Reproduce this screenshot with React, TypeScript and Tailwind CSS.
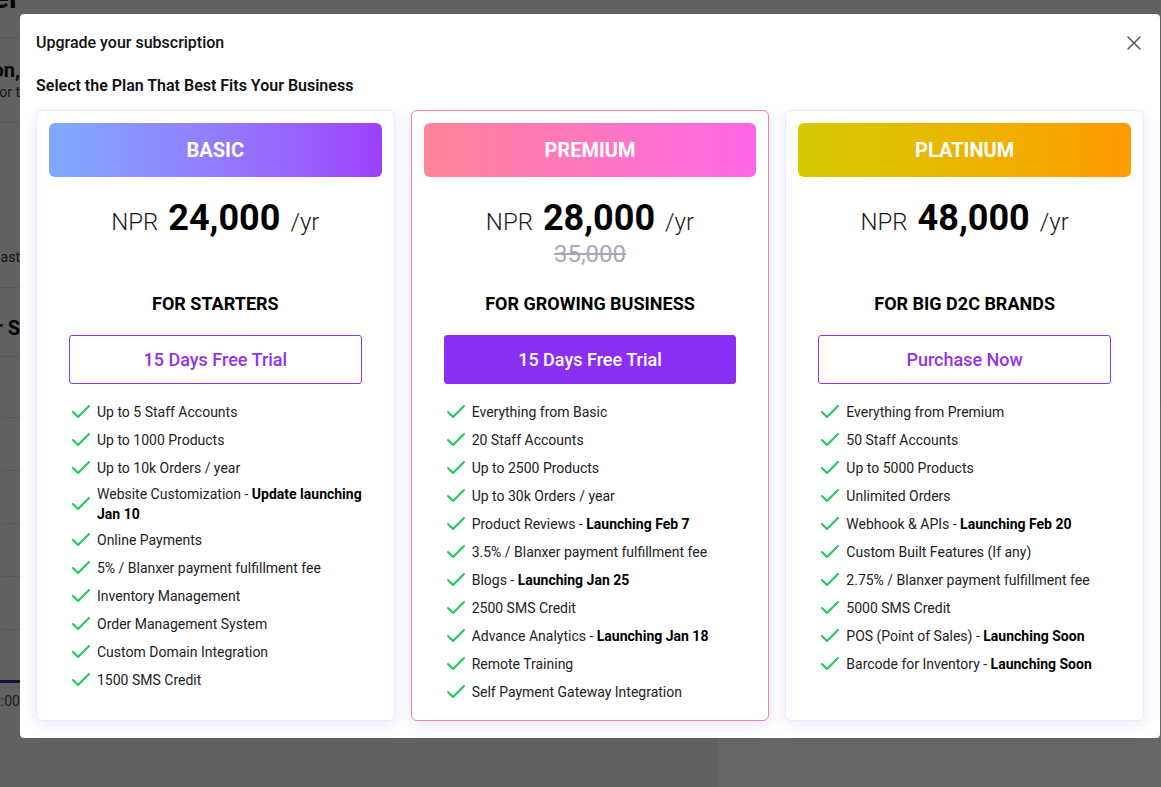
import React from "react";
import { Check, X } from "lucide-react";

// ──────────────────────────────────────────────────────────────
// Upgrade subscription modal — plan picker
// ──────────────────────────────────────────────────────────────

type Feature = { text: string; bold?: string };

type Plan = {
  name: string;
  gradient: string;
  price: string;
  oldPrice?: string;
  tagline: string;
  cta: string;
  filled?: boolean;
  highlight?: boolean;
  features: Feature[];
};

const plans: Plan[] = [
  {
    name: "BASIC",
    gradient: "bg-linear-to-r from-[#7eaaff] to-[#9c3ffd]",
    price: "24,000",
    tagline: "FOR STARTERS",
    cta: "15 Days Free Trial",
    features: [
      { text: "Up to 5 Staff Accounts" },
      { text: "Up to 1000 Products" },
      { text: "Up to 10k Orders / year" },
      { text: "Website Customization - ", bold: "Update launching Jan 10" },
      { text: "Online Payments" },
      { text: "5% / Blanxer payment fulfillment fee" },
      { text: "Inventory Management" },
      { text: "Order Management System" },
      { text: "Custom Domain Integration" },
      { text: "1500 SMS Credit" },
    ],
  },
  {
    name: "PREMIUM",
    gradient: "bg-linear-to-r from-[#ff8497] to-[#ff66e6]",
    price: "28,000",
    oldPrice: "35,000",
    tagline: "FOR GROWING BUSINESS",
    cta: "15 Days Free Trial",
    filled: true,
    highlight: true,
    features: [
      { text: "Everything from Basic" },
      { text: "20 Staff Accounts" },
      { text: "Up to 2500 Products" },
      { text: "Up to 30k Orders / year" },
      { text: "Product Reviews - ", bold: "Launching Feb 7" },
      { text: "3.5% / Blanxer payment fulfillment fee" },
      { text: "Blogs - ", bold: "Launching Jan 25" },
      { text: "2500 SMS Credit" },
      { text: "Advance Analytics - ", bold: "Launching Jan 18" },
      { text: "Remote Training" },
      { text: "Self Payment Gateway Integration" },
    ],
  },
  {
    name: "PLATINUM",
    gradient: "bg-linear-to-r from-[#d4cb00] to-[#ff9b00]",
    price: "48,000",
    tagline: "FOR BIG D2C BRANDS",
    cta: "Purchase Now",
    features: [
      { text: "Everything from Premium" },
      { text: "50 Staff Accounts" },
      { text: "Up to 5000 Products" },
      { text: "Unlimited Orders" },
      { text: "Webhook & APIs - ", bold: "Launching Feb 20" },
      { text: "Custom Built Features (If any)" },
      { text: "2.75% / Blanxer payment fulfillment fee" },
      { text: "5000 SMS Credit" },
      { text: "POS (Point of Sales) - ", bold: "Launching Soon" },
      { text: "Barcode for Inventory - ", bold: "Launching Soon" },
    ],
  },
];

function PlanCard({ plan }: { plan: Plan }) {
  return (
    <div
      className={`flex flex-col rounded-md border bg-white p-3 shadow-[0_4px_14px_rgba(124,58,237,0.13)] ${
        plan.highlight ? "border-[#f5829b]" : "border-[#ece8fc]"
      }`}
    >
      <div
        className={`flex h-[54px] items-center justify-center rounded-md text-xl font-bold text-white ${plan.gradient}`}
      >
        {plan.name}
      </div>

      {/* Price */}
      <div className="mt-[21px] flex h-[75px] flex-col items-center">
        <div className="flex items-baseline justify-center leading-10 text-[#1a1a1a]">
          <span className="text-2xl font-light">NPR</span>
          <span className="ml-2.5 text-4xl font-bold text-black">{plan.price}</span>
          <span className="ml-2.5 text-2xl font-light">/yr</span>
        </div>
        {plan.oldPrice && (
          <div className="text-2xl leading-8 text-[#a3aab5] line-through">
            {plan.oldPrice}
          </div>
        )}
      </div>

      <div className="mt-[17px] text-center text-lg font-bold leading-7 text-black">
        {plan.tagline}
      </div>

      <button
        className={`mx-5 mt-[17px] h-[49px] rounded-[3px] border text-lg font-medium ${
          plan.filled
            ? "border-[#8b2ff6] bg-[#8b2ff6] text-white"
            : "border-[#9333ea] bg-white text-[#9333ea]"
        }`}
      >
        {plan.cta}
      </button>

      {/* Features */}
      <ul className="mt-4 flex flex-col gap-1 pl-5 pr-4 text-sm leading-5 text-[#222]">
        {plan.features.map((f) => (
          <li key={f.text + (f.bold ?? "")} className="flex items-center gap-1">
            <Check size={24} strokeWidth={2} className="shrink-0 text-[#22c55e]" />
            <span>
              {f.text}
              {f.bold && <b className="font-bold text-black">{f.bold}</b>}
            </span>
          </li>
        ))}
      </ul>
    </div>
  );
}

function BackgroundPage() {
  return (
    <div className="flex h-full">
      {/* left column, mostly hidden behind the modal */}
      <div className="-ml-[680px] flex w-[700px] shrink-0 flex-col text-right text-[#111]">
        <div className="flex h-[38px] items-end justify-end border-b border-[#ddd] pb-6 text-3xl font-bold leading-none">
          Blanxer
        </div>
        <div className="mt-5 text-xl font-bold leading-6">Good afternoon,</div>
        <div className="text-sm leading-5 text-[#333]">Here is what is happening for t</div>
        <div className="mt-5 border-b border-[#ddd]" />
        <div className="mt-[124px] text-sm leading-5 text-[#333]">Compared to last</div>
        <div className="mt-5 border-b border-[#ddd]" />
        <div className="mt-7 text-xl font-bold leading-6">Top Customer S</div>
        <div className="mt-4 border-b border-[#ddd]" />
        <div className="mt-[60px] flex flex-col gap-[52px]">
          {[0, 1, 2, 3, 4].map((i) => (
            <div key={i} className="border-b border-dashed border-[#ccc]" />
          ))}
        </div>
        <div className="mt-[50px] h-[3px] bg-[#4c1d95]" />
        <div className="mt-2 text-sm leading-5 text-[#555]">12:00</div>
      </div>
      <div className="ml-auto w-[443px] pt-[400px]">
        <div className="h-[500px] rounded-lg bg-white" />
      </div>
    </div>
  );
}

export default function App() {
  return (
    <div className="relative h-[787px] w-full overflow-hidden bg-[#f3f3f3] font-['Roboto','Liberation_Sans',sans-serif]">
      <BackgroundPage />

      <div className="absolute inset-0 bg-black/60 pl-5 pt-3.5">
        <div className="h-[724px] w-[1140px] rounded bg-white px-4 pt-[17px]">
          <div className="flex items-center justify-between">
            <h2 className="text-base font-medium leading-6 text-[#111]">
              Upgrade your subscription
            </h2>
            <X size={24} strokeWidth={1.5} className="-mr-0.5 text-[#555]" />
          </div>

          <h3 className="mt-[19px] text-base font-semibold leading-6 text-[#111]">
            Select the Plan That Best Fits Your Business
          </h3>

          <div className="mt-[12px] grid h-[611px] grid-cols-3 gap-4">
            {plans.map((p) => (
              <PlanCard key={p.name} plan={p} />
            ))}
          </div>
        </div>
      </div>
    </div>
  );
}
